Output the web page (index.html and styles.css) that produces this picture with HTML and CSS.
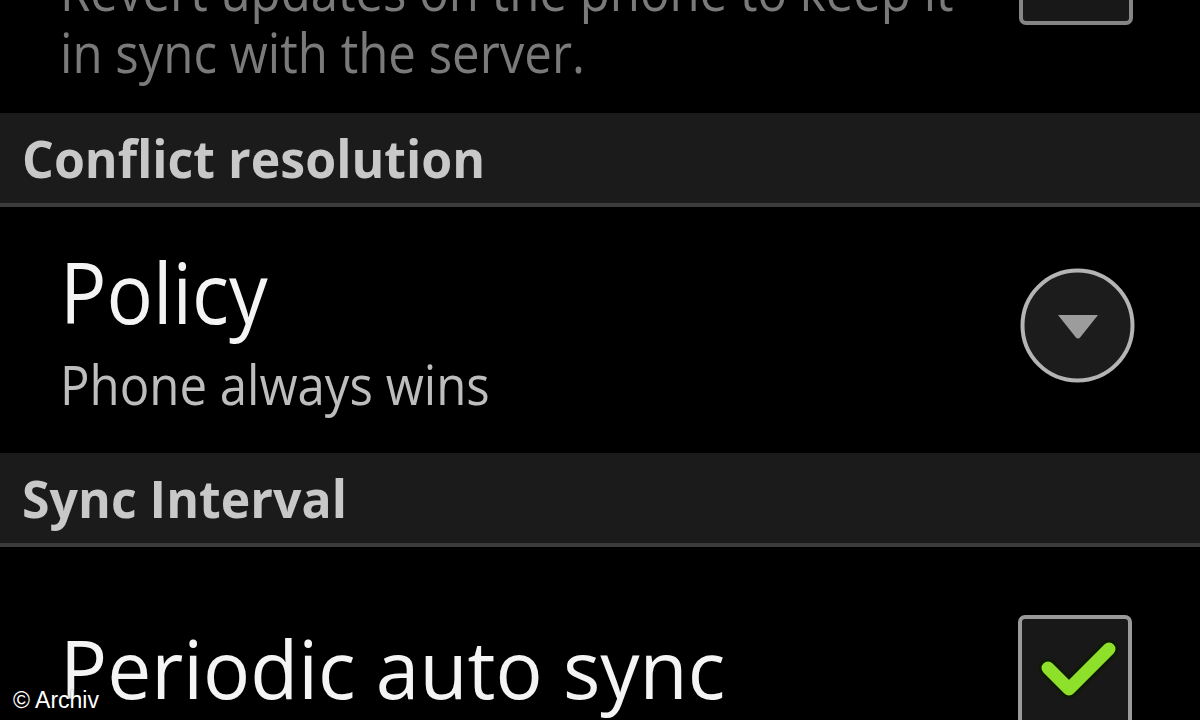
FILE: index.html
```html
<!DOCTYPE html>
<html lang="en">
<head>
<meta charset="utf-8">
<title>Sync settings</title>
<link rel="stylesheet" href="styles.css">
</head>
<body>
<div class="screen">
  <div class="pref pref-top">
    <div class="pref-text">
      <div class="summary dim"><span class="narrow">Revert updates on the phone to keep it</span></div>
      <div class="summary dim"><span class="narrow">in sync with the server.</span></div>
    </div>
    <div class="checkbox checkbox-top"></div>
  </div>

  <div class="category"><span class="narrow-bold">Conflict resolution</span></div>

  <div class="pref pref-policy">
    <div class="pref-text">
      <div class="title"><span class="narrow-title">Policy</span></div>
      <div class="summary sub"><span class="narrow">Phone always wins</span></div>
    </div>
    <div class="spinner">
      <svg width="115" height="115" viewBox="0 0 115 115">
        <circle cx="57.5" cy="57.5" r="55" fill="#1c1c1c" stroke="#b4b4b4" stroke-width="4"/>
        <path d="M38 47 L78 47 L60.5 69 Q58 72 55.5 69 Z" fill="#9c9c9c"/>
      </svg>
    </div>
  </div>

  <div class="category"><span class="narrow-bold">Sync Interval</span></div>

  <div class="pref pref-periodic">
    <div class="pref-text">
      <div class="title title-large"><span class="narrow-large">Periodic auto sync</span></div>
    </div>
    <div class="checkbox checkbox-on">
      <svg width="106" height="106" viewBox="0 0 106 106">
        <path d="M26 49 L47 70 L87 30" fill="none" stroke="#0f1a06" stroke-width="19" stroke-linejoin="round" stroke-linecap="round"/>
        <path d="M26 49 L47 70 L87 30" fill="none" stroke="#8fe02a" stroke-width="13" stroke-linejoin="round" stroke-linecap="round"/>
      </svg>
    </div>
  </div>

  <div class="credit">© Archiv</div>
</div>
</body>
</html>
```

FILE: styles.css
```css
html, body {
  margin: 0;
  padding: 0;
  background: #000;
}

.screen {
  position: relative;
  width: 1200px;
  height: 720px;
  overflow: hidden;
  background: #000;
  display: flex;
  flex-direction: column;
  font-family: "Open Sans", "Droid Sans", "DejaVu Sans", sans-serif;
}

.narrow,
.narrow-bold,
.narrow-title,
.narrow-large {
  display: inline-block;
  transform-origin: 0 50%;
}

.narrow { transform: scaleX(0.91); }
.narrow-bold { transform: scaleX(0.962); }
.narrow-title { transform: scaleX(0.92); }
.narrow-large { transform: scaleX(0.98); }

.pref {
  display: flex;
  flex-direction: row;
  align-items: flex-start;
  padding-left: 60px;
  flex-shrink: 0;
}

.pref-text {
  display: flex;
  flex-direction: column;
  flex: 1;
  min-width: 0;
}

.pref-top {
  margin-top: -60px;
  height: 173px;
  padding-right: 67px;
  box-sizing: border-box;
}

.pref-top .pref-text {
  padding-top: 19px;
}

.summary {
  font-size: 54px;
  line-height: 62px;
  white-space: nowrap;
}

.summary.dim {
  color: #7a7a7a;
}

.summary.sub {
  color: #bdbdbd;
  margin-top: 19px;
}

.title {
  font-size: 84px;
  line-height: 84px;
  color: #f4f4f4;
  white-space: nowrap;
}

.title-large {
  font-size: 80px;
  line-height: 80px;
}

.category {
  height: 90px;
  line-height: 90px;
  background: #1b1b1b;
  border-bottom: 4px solid #3c3c3c;
  padding-left: 22px;
  font-size: 52px;
  font-weight: 700;
  color: #c8c8c8;
  white-space: nowrap;
  flex-shrink: 0;
}

.pref-policy {
  height: 246px;
  box-sizing: border-box;
  padding-right: 65px;
}

.pref-policy .pref-text {
  padding-top: 43px;
}

.spinner {
  margin-top: 61px;
  width: 115px;
  height: 115px;
  flex-shrink: 0;
}

.spinner svg {
  display: block;
}

.pref-periodic {
  padding-right: 68px;
  flex: 1;
}

.pref-periodic .pref-text {
  padding-top: 81px;
}

.checkbox {
  width: 106px;
  height: 106px;
  border: 4px solid #9a9a9a;
  border-radius: 7px;
  background: #181818;
  flex-shrink: 0;
}

.checkbox svg {
  display: block;
}

.checkbox-top {
  margin-top: -29px;
  border-color: #858585;
}

.checkbox-on {
  margin-top: 68px;
}

.credit {
  position: absolute;
  left: 13px;
  bottom: 6px;
  font-family: "Liberation Sans", Arial, sans-serif;
  font-size: 23px;
  color: #fff;
  text-shadow: 0 0 2px rgba(0,0,0,0.6);
}
```
